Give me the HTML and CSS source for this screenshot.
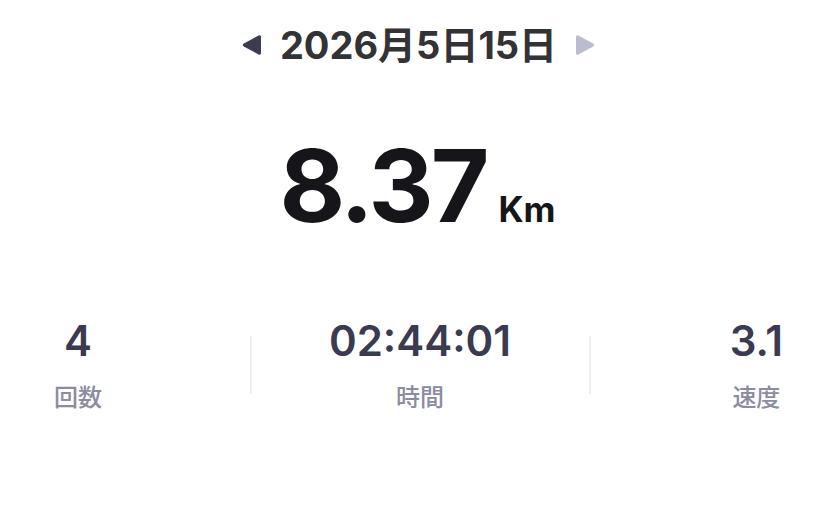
FILE: index.html
```html
<!DOCTYPE html>
<html lang="ja">
<head>
  <meta charset="UTF-8" />
  <meta name="viewport" content="width=device-width, initial-scale=1.0" />
  <title>記録</title>
  <link rel="stylesheet" href="styles.css">
</head>
<body>

  <!-- 日付 -->
  <div class="fecha">
    <svg class="seta" width="22" height="22" viewBox="0 0 22 22">
      <path d="M2.8 9.6 L17.6 1.6 Q20 0.4 20 3 L20 19 Q20 21.6 17.6 20.4 L2.8 12.4 Q0.6 11 2.8 9.6 Z" fill="#3b3b52"/>
    </svg>
    <span class="fecha-texto">2026月5日15日</span>
    <svg class="seta" width="22" height="22" viewBox="0 0 22 22">
      <path d="M19.2 9.6 L4.4 1.6 Q2 0.4 2 3 L2 19 Q2 21.6 4.4 20.4 L19.2 12.4 Q21.4 11 19.2 9.6 Z" fill="#bcbcd0"/>
    </svg>
  </div>

  <!-- 距離 -->
  <div class="distancia">
    <span class="valor">8.37</span>
    <span class="unidade">Km</span>
  </div>

  <!-- 統計 -->
  <div class="stats">
    <div class="stat stat-esq">
      <div class="stat-num">4</div>
      <div class="stat-label">回数</div>
    </div>
    <div class="divisor"></div>
    <div class="stat">
      <div class="stat-num">02:44:01</div>
      <div class="stat-label">時間</div>
    </div>
    <div class="divisor"></div>
    <div class="stat stat-dir">
      <div class="stat-num">3.1</div>
      <div class="stat-label">速度</div>
    </div>
  </div>

</body>
</html>
```

FILE: styles.css
```css
body {
  margin: 0;
  padding: 0;
  font-family: 'Inter', 'Noto Sans CJK JP', sans-serif;
  background: #ffffff;
}

.fecha {
  display: flex;
  justify-content: center;
  align-items: center;
  gap: 17px;
  padding-top: 22px;
  height: 46px;
}

.fecha-texto {
  font-size: 38px;
  font-weight: 700;
  color: #333336;
  line-height: 46px;
}

.seta {
  display: block;
}

.distancia {
  display: flex;
  justify-content: center;
  align-items: baseline;
  gap: 12px;
  margin-top: 62px;
  padding-right: 2px;
}

.valor {
  font-size: 101px;
  font-weight: 700;
  color: #16161a;
  letter-spacing: -3px;
  line-height: 110px;
}

.unidade {
  font-size: 35px;
  font-weight: 700;
  color: #16161a;
}

.stats {
  display: grid;
  grid-template-columns: 196px 1px 1fr 1px 193px;
  align-items: start;
  margin: 76px 54px 0;
}

.stat {
  display: flex;
  flex-direction: column;
  align-items: center;
  justify-self: center;
}

.stat-esq {
  justify-self: start;
}

.stat-dir {
  justify-self: end;
}

.stat-num {
  font-size: 42px;
  font-weight: 600;
  color: #3a3a50;
  line-height: 50px;
}

.stat-label {
  font-size: 24px;
  font-weight: 500;
  color: #8b8ba2;
  margin-top: 17px;
  line-height: 30px;
}

.divisor {
  width: 2px;
  height: 58px;
  background: #efeff2;
  margin-top: 20px;
}
```
